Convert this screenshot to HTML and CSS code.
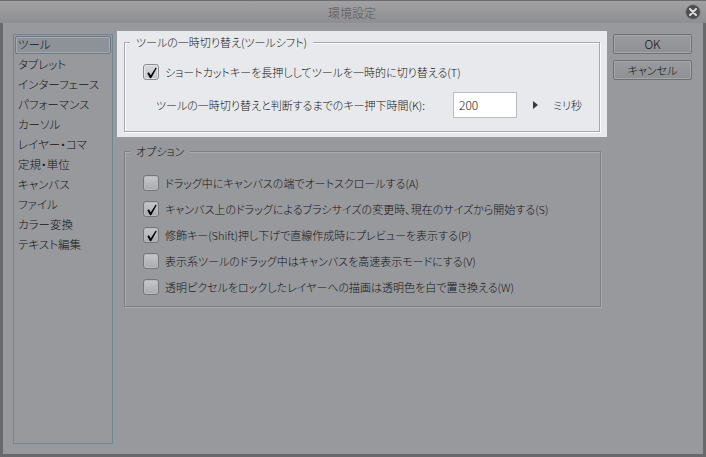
FILE: index.html
```html
<!DOCTYPE html>
<html lang="ja">
<head>
<meta charset="utf-8">
<title>環境設定</title>
<link rel="stylesheet" href="styles.css">
</head>
<body>
<div class="window">
  <div class="titlebar">
    <span class="title">環境設定</span>
    <span class="close">
      <svg width="16" height="16" viewBox="0 0 16 16">
        <circle cx="8" cy="8" r="7.2" fill="#4b4b4d" stroke="#7a7a7c" stroke-width="0.8"/>
        <path d="M5 5 L11 11 M11 5 L5 11" stroke="#d8d8d8" stroke-width="2.2" stroke-linecap="round"/>
      </svg>
    </span>
  </div>
  <div class="body">
    <ul class="nav">
      <li class="selected">ツール</li>
      <li>タブレット</li>
      <li>インターフェース</li>
      <li>パフォーマンス</li>
      <li>カーソル</li>
      <li>レイヤー・コマ</li>
      <li>定規・単位</li>
      <li>キャンバス</li>
      <li>ファイル</li>
      <li>カラー変換</li>
      <li>テキスト編集</li>
    </ul>
    <div class="main">
      <section class="panel">
        <fieldset class="group light">
          <legend>ツールの一時切り替え(ツールシフト)</legend>
          <div class="row">
            <span class="cb checked"><svg width="14" height="14" viewBox="0 0 14 14"><path d="M2.5 7.2 L4.2 6.3 L6.2 9.3 L11.6 1.2 L12.6 1.9 L6.6 12.6 L5.4 12.6 Z" fill="#000"/></svg></span>
            <span class="label">ショートカットキーを長押ししてツールを一時的に切り替える(T)</span>
          </div>
          <div class="row2">
            <span class="klabel">ツールの一時切り替えと判断するまでのキー押下時間(K):</span>
            <span class="input">200</span>
            <span class="tri"></span>
            <span class="unit">ミリ秒</span>
          </div>
        </fieldset>
      </section>
      <fieldset class="group options">
        <legend>オプション</legend>
        <div class="row">
          <span class="cb"></span>
          <span class="label">ドラッグ中にキャンバスの端でオートスクロールする(A)</span>
        </div>
        <div class="row">
          <span class="cb checked"><svg width="14" height="14" viewBox="0 0 14 14"><path d="M2.5 7.2 L4.2 6.3 L6.2 9.3 L11.6 1.2 L12.6 1.9 L6.6 12.6 L5.4 12.6 Z" fill="#000"/></svg></span>
          <span class="label">キャンバス上のドラッグによるブラシサイズの変更時、現在のサイズから開始する(S)</span>
        </div>
        <div class="row">
          <span class="cb checked"><svg width="14" height="14" viewBox="0 0 14 14"><path d="M2.5 7.2 L4.2 6.3 L6.2 9.3 L11.6 1.2 L12.6 1.9 L6.6 12.6 L5.4 12.6 Z" fill="#000"/></svg></span>
          <span class="label">修飾キー(Shift)押し下げで直線作成時にプレビューを表示する(P)</span>
        </div>
        <div class="row">
          <span class="cb"></span>
          <span class="label">表示系ツールのドラッグ中はキャンバスを高速表示モードにする(V)</span>
        </div>
        <div class="row">
          <span class="cb"></span>
          <span class="label">透明ピクセルをロックしたレイヤーへの描画は透明色を白で置き換える(W)</span>
        </div>
      </fieldset>
    </div>
    <div class="buttons">
      <div class="btn">OK</div>
      <div class="btn">キャンセル</div>
    </div>
  </div>
</div>
</body>
</html>
```
FILE: styles.css
```css
* { box-sizing: border-box; }
html, body { margin: 0; padding: 0; }
body {
  width: 706px;
  height: 457px;
  overflow: hidden;
  font-family: "Noto Sans CJK JP", "Liberation Sans", sans-serif;
  font-size: 11px;
  font-weight: 300;
  color: #141414;
  font-feature-settings: "palt";
}
.window {
  width: 706px;
  height: 457px;
  background: #68696b;
  display: flex;
  flex-direction: column;
}
.titlebar {
  height: 23px;
  flex: none;
  background: linear-gradient(#a2a2a4, #8e8e90);
  border-top: 1px solid #6c6c6e;
  display: flex;
  align-items: center;
  justify-content: center;
  padding: 0 3px;
}
.title {
  flex: 1;
  text-align: center;
  color: #58585a;
  padding-left: 16px;
  font-size: 12px;
}
.close {
  width: 16px;
  height: 16px;
  display: flex;
  margin-right: 2px;
}
.body {
  flex: 1;
  margin: 0 3px 3px 3px;
  background: #98999d;
  display: flex;
  padding: 8px 11px 10px 10px;
}
.nav {
  list-style: none;
  margin: 3px 0 0 0;
  padding: 0;
  width: 100px;
  flex: none;
  border: 1px solid #6e8794;
  display: flex;
  flex-direction: column;
  font-size: 11.5px;
}
.nav li {
  height: 18px;
  margin: 1px;
  padding: 0 0 0 2px;
  border: 1px solid transparent;
  line-height: 15px;
  border-radius: 2px;
  white-space: nowrap;
}
.nav li.selected {
  background: #8c9298;
  border-color: #6d7b86;
  box-shadow: inset 0 0 0 1px #a3aab0;
}
.main {
  width: 490px;
  flex: none;
  margin-left: 4px;
  display: flex;
  flex-direction: column;
}
.panel {
  background: #e7e9ec;
  padding: 3px 7px 4px 7px;
  height: 106px;
}
.group {
  margin: 0;
  border: 1px solid #a6a9ae;
  box-shadow: inset 1px 1px 0 #fbfcfd, 1px 1px 0 #fbfcfd;
  padding: 14px 10px 13px 18px;
  min-width: 0;
}
.group legend {
  margin-left: -13px;
  padding: 0 6px;
  line-height: 16px;
  height: 16px;
}
.light legend { background: #e7e9ec; }
.row {
  display: flex;
  align-items: center;
  height: 16px;
  white-space: nowrap;
}
.cb {
  width: 16px;
  height: 16px;
  flex: none;
  border: 1px solid #75767a;
  border-radius: 3px;
  background: linear-gradient(#c6c7ca, #a9aaae);
  box-shadow: inset 0 0 0 1px #b8b9bc;
  display: flex;
  align-items: center;
  justify-content: center;
  margin-right: 6px;
}
.light .cb {
  background: linear-gradient(#d9dadd, #c4c5c8);
  border-color: #8a8b8f;
  box-shadow: inset 0 0 0 1px #e4e5e7;
}
.cb svg { margin-left: 1px; margin-top: 1px; }
.row2 {
  display: flex;
  align-items: center;
  margin-top: 12px;
  padding-left: 13px;
  height: 26px;
  white-space: nowrap;
}
.klabel {
  width: 297px;
  flex: none;
}
.input {
  width: 64px;
  height: 26px;
  flex: none;
  background: #fff;
  border: 1px solid #b9bcc1;
  line-height: 24px;
  padding-left: 5px;
  font-size: 12px;
}
.tri {
  width: 0;
  height: 0;
  flex: none;
  border-left: 5px solid #3a3a3a;
  border-top: 4px solid transparent;
  border-bottom: 4px solid transparent;
  margin-left: 16px;
}
.unit { margin-left: 15px; }
.options {
  margin: 6px 6px 0 7px;
  border-color: #7e7f83;
  box-shadow: inset 1px 1px 0 #abacb0, 1px 1px 0 #abacb0;
  padding: 16px 10px 11px 18px;
  display: flex;
  flex-direction: column;
  gap: 10px;
}
.options legend { background: #98999d; }
.buttons {
  width: 79px;
  flex: none;
  margin: 3px 0 0 6px;
  display: flex;
  flex-direction: column;
  gap: 6px;
}
.btn {
  height: 20px;
  border: 1px solid #6f7074;
  border-radius: 2px;
  background: linear-gradient(#9a9b9f, #8f9094);
  box-shadow: inset 0 0 0 1px #a5a6aa;
  text-align: center;
  line-height: 18px;
  color: #111;
}
.btn:first-child {
  font-size: 12px;
}
```
